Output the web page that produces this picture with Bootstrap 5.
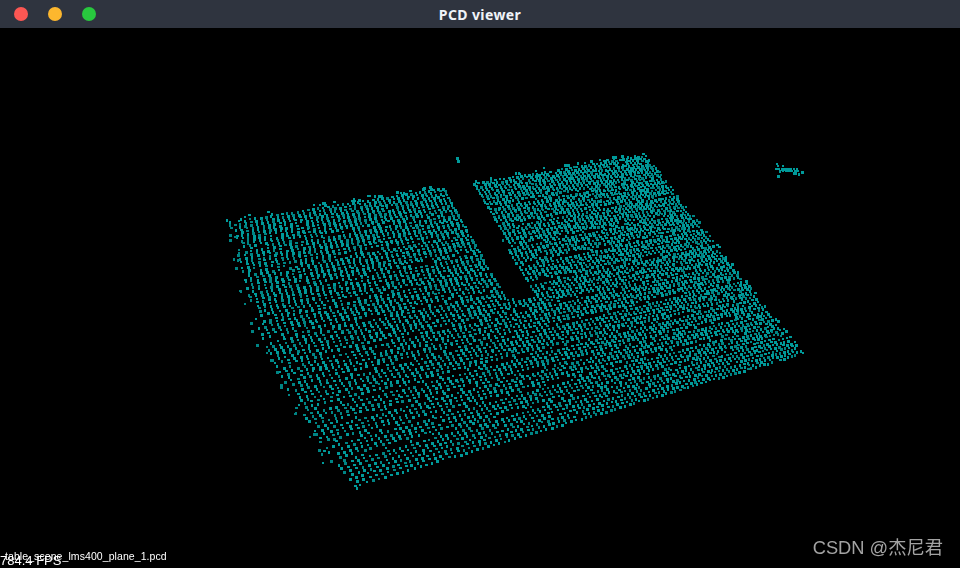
<!DOCTYPE html>
<html lang="zh-CN">
<head>
    <meta charset="UTF-8">
    <meta name="viewport" content="width=device-width, initial-scale=1.0">
    <title>PCD viewer</title>
    <link href="https://cdn.jsdelivr.net/npm/bootstrap@5.3.3/dist/css/bootstrap.min.css" rel="stylesheet">
    <style>
        html, body { height: 100%; overflow: hidden; background: #000; }
        .title-bar { height: 28px; background: #2f343f; }
        .win-btn { width: 14px; height: 14px; border-radius: 50%; }
        .win-close { background: #fc5753; }
        .win-min { background: #fdb72e; }
        .win-max { background: #28c83e; }
        .win-btns { left: 14px; top: 7px; gap: 20px; }
        .win-title { font: 700 14px "Noto Sans", sans-serif; color: #f0f3f8; letter-spacing: .4px; }
        .stage { height: 540px; background: #000; }
        #cloud { display: block; }
        .file-label { left: 5px; top: 522px; font: 10.5px/12px "Liberation Sans", sans-serif; color: #fff; letter-spacing: .08px; white-space: nowrap; }
        .fps-label { left: 0; top: 525px; font: 13px/15px "Liberation Sans", sans-serif; color: #fff; white-space: nowrap; }
        .watermark { right: 17px; top: 508px; font: 18.3px/24px "Liberation Sans", "Noto Sans CJK SC", sans-serif; color: #a3a3a3; white-space: nowrap; }
    </style>
</head>
<body>
    <div class="title-bar position-relative d-flex align-items-center justify-content-center">
        <div class="win-btns position-absolute d-flex">
            <div class="win-btn win-close"></div>
            <div class="win-btn win-min"></div>
            <div class="win-btn win-max"></div>
        </div>
        <span class="win-title">PCD viewer</span>
    </div>
    <div class="stage position-relative">
        <canvas id="cloud" width="960" height="540"></canvas>
        <span class="file-label position-absolute">table_scene_lms400_plane_1.pcd</span>
        <span class="fps-label position-absolute">784.4 FPS</span>
        <span class="watermark position-absolute">CSDN @杰尼君</span>
    </div>
    <script src="https://cdn.jsdelivr.net/npm/bootstrap@5.3.3/dist/js/bootstrap.bundle.min.js"></script>
    <script>
        // seeded so every run draws the same cloud
        let seed = 12345;
        function rnd() {
            seed = (seed * 1664525 + 1013904223) >>> 0;
            return seed / 4294967296;
        }

        // corners of the plane on screen (page coordinates)
        const TL = [233, 221], TR = [645, 155], BR = [802, 352], BL = [353, 485];

        function solveHomography(p) {
            const [x0, y0] = p[0], [x1, y1] = p[1], [x2, y2] = p[2], [x3, y3] = p[3];
            const dx1 = x1 - x2, dx2 = x3 - x2, sx = x0 - x1 + x2 - x3;
            const dy1 = y1 - y2, dy2 = y3 - y2, sy = y0 - y1 + y2 - y3;
            const d = dx1 * dy2 - dx2 * dy1;
            const g = (sx * dy2 - dx2 * sy) / d;
            const h = (dx1 * sy - sx * dy1) / d;
            return [x1 - x0 + g * x1, x3 - x0 + h * x3, x0, y1 - y0 + g * y1, y3 - y0 + h * y3, y0, g, h];
        }
        const H = solveHomography([TL, TR, BR, BL]);
        function project(u, v) {
            // the left edge of the real scan bows outwards
            u = u - 0.04 * Math.sin(Math.PI * v) * (1 - u) * (1 - u);
            const w = H[6] * u + H[7] * v + 1;
            return [(H[0] * u + H[1] * v + H[2]) / w, (H[3] * u + H[4] * v + H[5]) / w];
        }

        // the notch cut into the far edge
        const slot = [[440, 182], [465, 172], [534, 296], [511, 298], [500, 287]];
        function inSlot(x, y) {
            let inside = false;
            for (let i = 0, j = slot.length - 1; i < slot.length; j = i++) {
                const [xi, yi] = slot[i], [xj, yj] = slot[j];
                if ((yi > y) !== (yj > y) && x < (xj - xi) * (y - yi) / (yj - yi) + xi) inside = !inside;
            }
            return inside;
        }

        const ctx = document.getElementById('cloud').getContext('2d');
        const offY = 28;
        // points land on whole pixels, 2 or 3 wide, as in the GL viewport
        function dot(x, y, bright) {
            ctx.fillStyle = bright ? '#009a9a' : '#008484';
            const w = rnd() < 0.5 ? 3 : 2, h = rnd() < 0.6 ? 3 : 2;
            ctx.fillRect(Math.round(x), Math.round(y) - offY, w, h);
        }

        const COLS = 92, ROWS = 84;
        // thin rows make the dark streaks
        const thinRows = new Set([10, 18, 26, 33, 40, 48, 55, 62, 67, 72, 77]);

        for (let r = 0; r <= ROWS; r++) {
            const thin = thinRows.has(r);
            const rowShift = (rnd() - 0.5) * 0.25;
            for (let c = 0; c <= COLS; c++) {
                if (thin && rnd() < 0.45) continue;
                if (rnd() < 0.015) continue;
                const u = (c + rowShift + (rnd() - 0.5) * 0.12) / COLS;
                const v = (r + (rnd() - 0.5) * 0.22) / ROWS;
                if (u < 0 || u > 1) continue;
                const [x, y] = project(u, v);
                if (inSlot(x, y)) continue;
                dot(x, y, rnd() < 0.7);
            }
        }

        // loose points along the far edge
        for (let i = 0; i < 60; i++) {
            const u = rnd();
            const [x, y] = project(u, -0.006 - rnd() * 0.016);
            if (!inSlot(x, y)) dot(x, y, true);
        }
        // loose points along the left edge
        for (let i = 0; i < 30; i++) {
            const [x, y] = project(-0.003 - rnd() * 0.012, rnd());
            dot(x, y, false);
        }
        // stragglers from the reference
        [[456, 157], [457, 160], [356, 487], [226, 219], [229, 221], [322, 462], [323, 450]].forEach(p => dot(p[0], p[1], true));
        [[776, 163], [777, 165], [782, 165], [775, 168], [778, 168], [781, 168], [784, 168], [787, 168], [790, 168], [793, 168], [796, 168],
         [779, 170], [782, 170], [785, 170], [788, 170], [791, 170], [794, 170], [797, 170], [793, 172], [801, 171], [798, 173], [777, 175], [794, 173]]
            .forEach(p => dot(p[0], p[1], true));
    </script>
</body>
</html>
